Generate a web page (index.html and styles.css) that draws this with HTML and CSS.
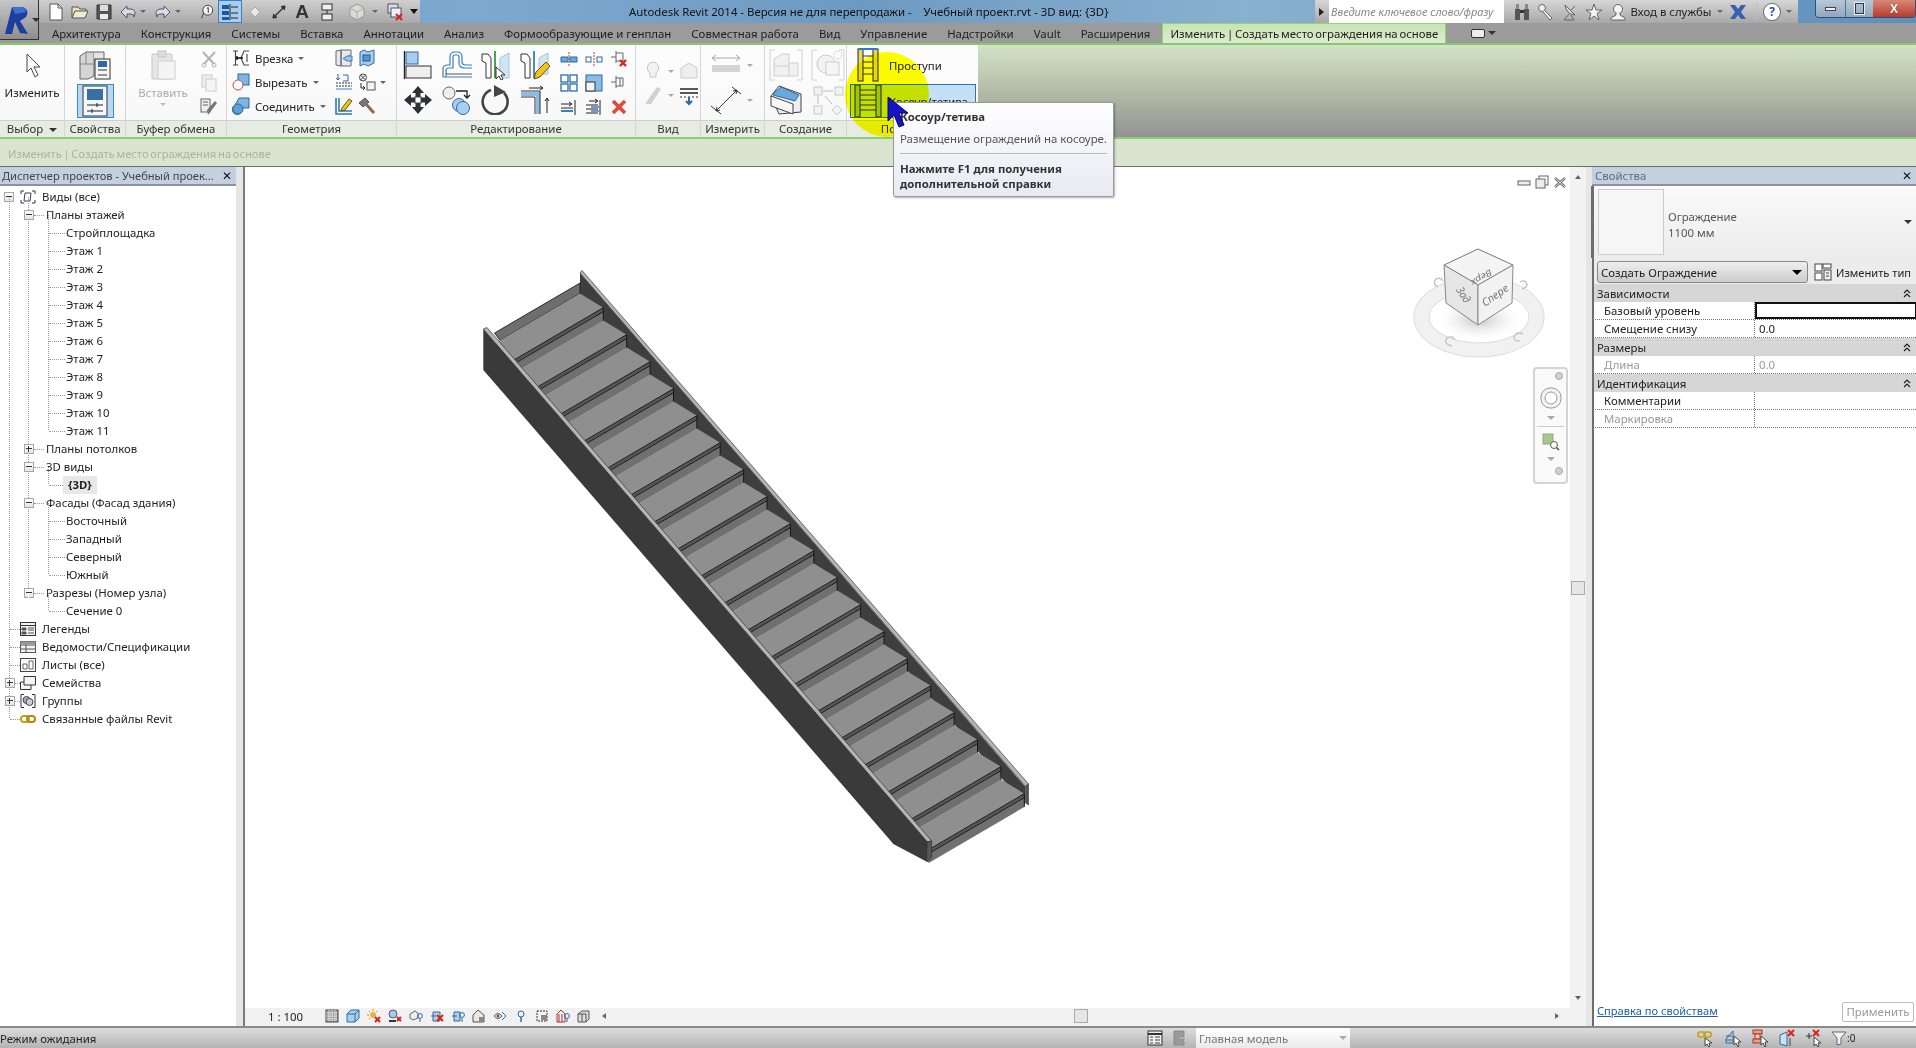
FILE: index.html
```html
<!DOCTYPE html>
<html lang="ru">
<head>
<meta charset="utf-8">
<title>Autodesk Revit 2014</title>
<link rel="stylesheet" href="styles.css">
</head>
<body>
<div class="app">

  <div class="appbtn">
    <svg width="27" height="30" viewBox="0 0 27 30"><path d="M1 29 L8 2 L19 2 Q26 5 22 12 L16 16 L24 29 L16 28 L11 17 L8 29Z" fill="#1c3f9e"/><path d="M8 2 L19 2 Q22 3 22 7 L11 9Z" fill="#3f6fd0"/></svg>
    <span class="caret dark"></span>
  </div>

  <header class="titlebar">
    <div class="qat">
      <svg class="q q1" viewBox="0 0 16 18"><path d="M2 1H10L14 5V17H2Z" fill="#fff" stroke="#555"/><path d="M10 1V5H14" fill="none" stroke="#555"/></svg>
      <svg class="q q2" viewBox="0 0 18 18"><path d="M1 15V4H7L9 6H15V8" fill="#e8e0b8" stroke="#555"/><path d="M1 15L4 8H17L14 15Z" fill="#f1eacb" stroke="#555"/></svg>
      <svg class="q q3" viewBox="0 0 16 18"><path d="M1 2H15V16H1Z" fill="#555" stroke="#333"/><rect x="4" y="2" width="8" height="6" fill="#ddd"/><rect x="4" y="11" width="8" height="5" fill="#eee"/></svg>
      <svg class="q q4" viewBox="0 0 18 18"><path d="M8 3L2 9L8 15V11H12Q15 11 15 14Q18 7 12 6H8Z" fill="#d6dde6" stroke="#556"/></svg>
      <span class="caret small"></span>
      <svg class="q q5" viewBox="0 0 18 18"><path d="M10 3L16 9L10 15V11H6Q3 11 3 14Q0 7 6 6H10Z" fill="#d6dde6" stroke="#556"/></svg>
      <span class="caret small"></span>
      <svg class="q q6" viewBox="0 0 20 18"><path d="M5 16L8 9" stroke="#333" fill="none"/><circle cx="12" cy="7" r="5.5" fill="#f4f4f4" stroke="#333"/><path d="M11 5L12.5 4V10" stroke="#222" fill="none"/></svg>
      <span class="qhl"><svg width="18" height="18" viewBox="0 0 18 18"><rect x="1" y="2" width="7" height="4" fill="#1d5a9c"/><rect x="1" y="8" width="7" height="4" fill="#1d5a9c"/><rect x="1" y="14" width="7" height="3" fill="#1d5a9c"/><path d="M10 4H17M10 10H17M10 15H17M9 1V17" stroke="#222" fill="none"/></svg></span>
      <svg class="q q7" viewBox="0 0 18 18"><path d="M4 9L9 4L14 9L9 14Z" fill="#e7e7e7" stroke="#aaa"/></svg>
      <svg class="q q8" viewBox="0 0 18 18"><path d="M3 15L15 3M3 15L7 14M3 15L4 11M15 3L11 4M15 3L14 7" fill="none" stroke="#333" stroke-width="1.4"/></svg>
      <span class="qa">A</span>
      <svg class="q q9" viewBox="0 0 16 18"><rect x="3" y="1" width="10" height="6" fill="#eee" stroke="#333"/><rect x="3" y="11" width="10" height="6" fill="#eee" stroke="#333"/><path d="M8 7V11" stroke="#333"/></svg>
      <svg class="q q10" viewBox="0 0 18 18"><path d="M9 1L16 5V13L9 17L2 13V5Z" fill="#d8dcd8" stroke="#999"/><path d="M2 5L9 9L16 5M9 9V17" stroke="#aaa" fill="none"/></svg>
      <span class="caret small"></span>
      <svg class="q q11" viewBox="0 0 18 18"><rect x="2" y="1" width="10" height="9" fill="#dde" stroke="#555"/><rect x="5" y="5" width="10" height="9" fill="#eef" stroke="#555"/><path d="M10 11L16 17M16 11L10 17" stroke="#d8231c" stroke-width="2"/></svg>
      <span class="qend"></span>
    </div>
    <div class="title-text">Autodesk Revit 2014 - Версия не для перепродажи -&nbsp;&nbsp;&nbsp; Учебный проект.rvt - 3D вид: {3D}</div>
    <div class="infobar">
      <span class="tri-right"></span>
      <span class="search">Введите ключевое слово/фразу</span>
      <svg class="q r1" viewBox="0 0 18 18"><rect x="2" y="6" width="5" height="11" fill="#555"/><rect x="11" y="6" width="5" height="11" fill="#555"/><rect x="3" y="1" width="3" height="5" fill="#888"/><rect x="12" y="1" width="3" height="5" fill="#888"/><rect x="7" y="7" width="4" height="3" fill="#333"/></svg>
      <svg class="q r2" viewBox="0 0 18 18"><circle cx="5" cy="5" r="3.5" fill="#eee" stroke="#666"/><path d="M7.5 7.5L15 15L13 17L6 9" fill="#eee" stroke="#666"/></svg>
      <svg class="q r3" viewBox="0 0 18 18"><path d="M4 2Q5 11 14 12Z" fill="#ddd" stroke="#666"/><path d="M9 8L14 3M8 11L3 17H13L10 12" fill="none" stroke="#666"/></svg>
      <svg class="q r4" viewBox="0 0 18 18"><path d="M9 1L11 7H17L12 10.5L14 17L9 13L4 17L6 10.5L1 7H7Z" fill="#f3f3f3" stroke="#666"/></svg>
      <svg class="q r5" viewBox="0 0 18 18"><circle cx="9" cy="6" r="4.5" fill="#f3f3f3" stroke="#666"/><path d="M7 10V12L2 15V17H16V15L11 12V10" fill="#f3f3f3" stroke="#666"/></svg>
      <span class="login">Вход в службы</span>
      <span class="caret small"></span>
      <svg class="q r6" viewBox="0 0 18 18"><path d="M1 2H6L9 6L12 2H17L12 9L17 16H12L9 12L6 16H1L6 9Z" fill="#3a5fb0"/></svg>
      <span class="vsep"></span>
      <span class="help">?</span>
      <span class="caret small"></span>
    </div>
    <div class="winbtns">
      <span class="wb wb-min"><i></i></span>
      <span class="wb wb-res"><i></i></span>
      <span class="wb wb-close">X</span>
    </div>
  </header>

  <nav class="tabs">
    <span class="tab">Архитектура</span>
    <span class="tab">Конструкция</span>
    <span class="tab">Системы</span>
    <span class="tab">Вставка</span>
    <span class="tab">Аннотации</span>
    <span class="tab">Анализ</span>
    <span class="tab">Формообразующие и генплан</span>
    <span class="tab">Совместная работа</span>
    <span class="tab">Вид</span>
    <span class="tab">Управление</span>
    <span class="tab">Надстройки</span>
    <span class="tab">Vault</span>
    <span class="tab">Расширения</span>
    <span class="tab tab-active">Изменить | Создать место ограждения на основе</span>
    <span class="tabopt"><i></i><span class="caret dark"></span></span>
  </nav>

  <section class="ribbon">

    <div class="panel p-select">
      <div class="body col-center">
        <svg width="24" height="30" viewBox="0 0 24 30"><path d="M7 4V22L11 18L15 27L18 25L14 17H20Z" fill="#fff" stroke="#444"/></svg>
        <span class="big-label">Изменить</span>
      </div>
      <div class="foot">Выбор <span class="caret dark foot-caret"></span></div>
    </div>

    <div class="panel p-props">
      <div class="body col-center props-body">
        <svg width="34" height="30" viewBox="0 0 34 30"><path d="M2 6L8 2H16V26L10 29H2Z" fill="#d5d5d5" stroke="#666"/><path d="M16 2H26V10H16" fill="#e4e4e4" stroke="#666"/><path d="M2 14H16M8 2V14" stroke="#888" fill="none"/><rect x="17" y="9" width="15" height="20" fill="#f5f5f5" stroke="#333"/><rect x="20" y="11" width="9" height="6" fill="#2d68a8"/><path d="M20 20H29M20 25H29" stroke="#333"/></svg>
        <span class="props-hl"><svg width="28" height="32" viewBox="0 0 28 32"><rect x="2" y="1" width="24" height="30" fill="#f3f6fa" stroke="#333"/><rect x="6" y="4" width="16" height="11" fill="#3a6ea8"/><path d="M6 20H22M6 26H22M16 18V22M11 24V28" stroke="#222"/></svg></span>
      </div>
      <div class="foot">Свойства</div>
    </div>

    <div class="panel p-clip">
      <div class="body clip-body">
        <div class="col-center clip-main">
          <svg width="28" height="30" viewBox="0 0 28 30"><rect x="3" y="4" width="20" height="25" rx="1" fill="#e6e6e6" stroke="#c5c5c5"/><rect x="9" y="1" width="8" height="6" fill="#dcdcdc" stroke="#c5c5c5"/><rect x="9" y="11" width="17" height="18" fill="#f4f4f4" stroke="#cfcfcf"/></svg>
          <span class="big-label muted">Вставить</span>
          <span class="caret muted-caret"></span>
        </div>
        <div class="stack3">
          <svg class="i18" viewBox="0 0 18 18"><path d="M3 2L14 14M15 2L4 14" stroke="#b4b4b4" stroke-width="2"/><circle cx="4" cy="15" r="2" fill="none" stroke="#b4b4b4"/><circle cx="14" cy="15" r="2" fill="none" stroke="#b4b4b4"/></svg>
          <svg class="i18" viewBox="0 0 18 18"><rect x="2" y="1" width="10" height="12" fill="#eee" stroke="#ccc"/><rect x="6" y="5" width="10" height="12" fill="#f5f5f5" stroke="#ccc"/></svg>
          <svg class="i18" viewBox="0 0 18 18"><rect x="1" y="1" width="9" height="13" fill="#eee" stroke="#666"/><path d="M3 4H8M3 7H8" stroke="#666"/><path d="M8 17L17 5L15 3L7 12Z" fill="#777"/></svg>
        </div>
      </div>
      <div class="foot">Буфер обмена</div>
    </div>

    <div class="panel p-geom">
      <div class="body geom-body">
        <div class="geom-list">
          <div class="gi"><svg class="i18" viewBox="0 0 18 18"><path d="M1 2H6M1 16H6M3.5 2V16M17 2H12L9 9L12 16H17M15 5V13" fill="none" stroke="#444" stroke-width="1.1"/><path d="M4 9H11M5 7V11" stroke="#111" stroke-width="1.4"/></svg><span>Врезка</span><span class="caret small"></span></div>
          <div class="gi"><svg class="i18" viewBox="0 0 18 18"><rect x="6" y="1" width="11" height="11" fill="#7fb3e0" stroke="#2b6ba5"/><circle cx="6" cy="12" r="5" fill="#fff" stroke="#c0504d"/></svg><span>Вырезать</span><span class="caret small"></span></div>
          <div class="gi"><svg class="i18" viewBox="0 0 18 18"><path d="M7 1H17V11H10A5 5 0 1 1 3 8Z" fill="#7fb3e0" stroke="#2b6ba5"/><circle cx="6" cy="12" r="5" fill="#5f9fd6" stroke="#2b6ba5"/></svg><span>Соединить</span><span class="caret small"></span></div>
        </div>
        <div class="stack3">
          <svg class="i18" viewBox="0 0 18 18"><path d="M1 2L6 1V17L1 16ZM6 1H16V6L10 9L16 12V17H6Z" fill="#e9e9e9" stroke="#667"/><path d="M17 7H12L8 9.5L12 12H17Z" fill="#9ac6ea" stroke="#3a7fc1"/></svg>
          <svg class="i18" viewBox="0 0 18 18"><path d="M1 10H17M1 13H17" stroke="#333" stroke-dasharray="2 1"/><path d="M1 16H17" stroke="#3a7fc1"/><path d="M8 2H13V8H8M3 1V7M1 5L3 7L5 5" fill="none" stroke="#2b6ba5"/></svg>
          <svg class="i18" viewBox="0 0 18 18"><path d="M1 1V17H17M4 1V14H17" fill="none" stroke="#2b7ac0" stroke-width="1.6"/><path d="M7 11L14 2L17 4L10 13L6 14Z" fill="#f0c419" stroke="#6b5410"/></svg>
        </div>
        <div class="stack3 wide-stack">
          <svg class="i18" viewBox="0 0 18 18"><path d="M2 3L6 1L10 3L16 1V14L10 17L6 15L2 17Z" fill="#a9cdec" stroke="#2b6ba5"/><rect x="5" y="6" width="7" height="6" fill="#5c96cc" stroke="#1e5a94"/></svg>
          <span class="withcaret"><svg class="i18" viewBox="0 0 18 18"><circle cx="5" cy="4.5" r="3.5" fill="none" stroke="#444"/><path d="M2.5 2L7.5 7M7.5 2L2.5 7" stroke="#444"/><rect x="9" y="9" width="8" height="8" fill="#f3f3f3" stroke="#555"/><path d="M3 10V15H7M5 13L7 15L5 17" fill="none" stroke="#222"/></svg><span class="caret small"></span></span>
          <svg class="i18" viewBox="0 0 18 18"><path d="M1 6L7 1L11 5L5 10Z" fill="#777" stroke="#555"/><path d="M8 7L16 16" stroke="#8a6d50" stroke-width="3"/></svg>
        </div>
      </div>
      <div class="foot">Геометрия</div>
    </div>

    <div class="panel p-edit">
      <div class="body edit-body">
        <div class="edit-big">
          <svg class="i30" viewBox="0 0 30 30"><path d="M1.5 1V29" stroke="#222" stroke-width="1.4"/><rect x="3" y="2" width="12" height="12" fill="#a8cdef" stroke="#2b6ba5"/><rect x="3" y="16" width="25" height="12" fill="#efefef" stroke="#333"/></svg>
          <svg class="i30" viewBox="0 0 30 30"><path d="M1 27V19Q1 15 6 15H8V7Q8 2 13 2H15Q20 2 20 7V12Q20 15 24 15H30M1 27H30M4 27V20Q4 18 7 18H11V7Q11 5 13 5H15Q17 5 17 7V13Q17 18 23 18H30" fill="none" stroke="#3a7fc1" stroke-width="1.2"/><path d="M4 24H30" stroke="#555"/></svg>
          <svg class="i30" viewBox="0 0 30 30"><path d="M1 4H7L10 8V28H5V13L1 11Z" fill="#fff" stroke="#333"/><path d="M14 1V28" stroke="#3a9a3a" stroke-width="1.8"/><path d="M28 3L19 8V28H28Z" fill="#d0e4f4" stroke="#a5c4de"/><path d="M15 17V29L18 26L20 30L22 29L20 25H24Z" fill="#fff" stroke="#333"/></svg>
          <svg class="i30" viewBox="0 0 30 30"><path d="M1 4H7L10 8V28H5V13L1 11Z" fill="#fff" stroke="#333"/><path d="M14 1V28" stroke="#3a7fc1" stroke-width="1.8"/><path d="M28 3L19 8V24H28Z" fill="#d0e4f4" stroke="#a5c4de"/><path d="M14 29L16 22L26 12L30 16L20 27Z" fill="#f0c419" stroke="#6b5410"/></svg>
          <svg class="i30" viewBox="0 0 30 30"><path d="M15 1L21 8H17.5V12H12.500V8H9ZM15 29L21 22H17.5V18H12.500V22H9ZM1 15L8 9V12.500H12V17.500H8V21ZM29 15L22 9V12.500H18V17.500H22V21Z" fill="#2a3238"/><rect x="12" y="12" width="6" height="6" fill="#fff" stroke="#444"/></svg>
          <svg class="i30" viewBox="0 0 30 30"><circle cx="7" cy="8" r="6" fill="#eee" stroke="#666"/><path d="M14 6H25V13M22 10L25 13L28 10" fill="none" stroke="#222" stroke-width="1.3"/><circle cx="17" cy="20" r="6.500" fill="#a8cdef" stroke="#2b6ba5"/><circle cx="21" cy="23" r="6.500" fill="#a8cdef" stroke="#2b6ba5"/></svg>
          <svg class="i30" viewBox="0 0 30 30"><path d="M23 8A12.500 12.500 0 1 1 10 5" fill="none" stroke="#444" stroke-width="2.6"/><path d="M13 0L25 7L13 12Z" fill="#444"/></svg>
          <svg class="i30" viewBox="0 0 30 30"><path d="M1 9H18V29" fill="none" stroke="#8bbce6" stroke-width="4"/><path d="M1 6H20V29M1 12H15V29" fill="none" stroke="#333"/><path d="M9 3H23M20 1L23 3L20 5M27 28V13M25 16L27 13L29 16" fill="none" stroke="#222"/></svg>
          <span></span>
        </div>
        <div class="edit-small">
          <svg class="i18" viewBox="0 0 18 18"><path d="M9 2V17" stroke="#c0392b" stroke-dasharray="2 1"/><path d="M1 7H8V12H1ZM10 7H17V12H10Z" fill="#6aa8dc" stroke="#2b6ba5"/></svg>
          <svg class="i18" viewBox="0 0 18 18"><path d="M9 2V17" stroke="#c0392b" stroke-dasharray="2 1"/><rect x="1" y="7" width="5" height="5" fill="#fff" stroke="#2b6ba5"/><rect x="12" y="7" width="5" height="5" fill="#fff" stroke="#2b6ba5"/></svg>
          <svg class="i18" viewBox="0 0 18 18"><path d="M6 1V13M1 7H6M6 3H13V11H6" fill="none" stroke="#666"/><path d="M10 10L16 16M16 10L10 16" stroke="#d8231c" stroke-width="2.4"/></svg>
          <svg class="i18" viewBox="0 0 18 18"><rect x="1" y="1" width="7" height="7" fill="#fff" stroke="#2b6ba5" stroke-width="1.3"/><rect x="10" y="1" width="7" height="7" fill="#fff" stroke="#2b6ba5" stroke-width="1.3"/><rect x="1" y="10" width="7" height="7" fill="#fff" stroke="#2b6ba5" stroke-width="1.3"/><rect x="10" y="10" width="7" height="7" fill="#fff" stroke="#2b6ba5" stroke-width="1.3"/></svg>
          <svg class="i18" viewBox="0 0 18 18"><rect x="1" y="1" width="16" height="16" fill="#8bbce6" stroke="#2b6ba5"/><rect x="1" y="8" width="9" height="9" fill="#f4f4f4" stroke="#333"/></svg>
          <svg class="i18" viewBox="0 0 18 18"><path d="M6 2V14M1 8H6M6 4H13V12H6M10 4V12" fill="none" stroke="#666"/></svg>
          <svg class="i18" viewBox="0 0 18 18"><path d="M1 6H11M9 4L12 6L9 8" fill="none" stroke="#222"/><path d="M1 10H13" stroke="#222"/><path d="M1 13H13" stroke="#3a7fc1" stroke-width="2"/><path d="M15 2V17" stroke="#222"/></svg>
          <svg class="i18" viewBox="0 0 18 18"><path d="M4 3H12M10 1L13 3L10 5" fill="none" stroke="#222"/><path d="M1 7H13M1 11H13M1 15H13" stroke="#222"/><path d="M6 9H14M6 13H14" stroke="#3a7fc1" stroke-width="1.6"/><path d="M15 2V17" stroke="#222"/></svg>
          <svg class="i18" viewBox="0 0 18 18"><path d="M3 3L15 15M15 3L3 15" stroke="#e0493b" stroke-width="3.6"/></svg>
        </div>
      </div>
      <div class="foot">Редактирование</div>
    </div>

    <div class="panel p-view">
      <div class="body pair-body">
        <span class="withcaret"><svg class="i22" viewBox="0 0 22 22"><path d="M11 2A6 6 0 0 1 14 13V17H8V13A6 6 0 0 1 11 2Z" fill="#f2f2f2" stroke="#c8c8c8"/></svg><span class="caret small faint"></span><svg class="i22" viewBox="0 0 22 22"><path d="M3 8L11 3L19 8V18H3Z" fill="#eee" stroke="#ccc"/></svg></span>
        <span class="withcaret"><svg class="i22" viewBox="0 0 22 22"><path d="M3 20L15 3L19 5L9 20Z" fill="#d0d0d0"/></svg><span class="caret small faint"></span><svg class="i22" viewBox="0 0 22 22"><path d="M2 5H20M2 9H20" stroke="#222" stroke-width="1.4"/><path d="M2 13H20" stroke="#333" stroke-dasharray="2 2"/><path d="M11 13V20M8 17L11 20L14 17" fill="none" stroke="#2b6ba5" stroke-width="2"/></svg></span>
      </div>
      <div class="foot">Вид</div>
    </div>

    <div class="panel p-measure">
      <div class="body pair-body">
        <span class="withcaret"><svg class="i30w" viewBox="0 0 34 30"><path d="M3 8H31M3 8L7 5M3 8L7 11M31 8L27 5M31 8L27 11" fill="none" stroke="#aaa"/><rect x="3" y="15" width="28" height="7" fill="#d4d4d4"/></svg><span class="caret small faint"></span></span>
        <span class="withcaret"><svg class="i30w" viewBox="0 0 34 30"><path d="M7 26L28 5M2 21L12 29M23 2L32 9" fill="none" stroke="#333"/><path d="M7 26L11 25M7 26L8 22M28 5L24 6M28 5L27 9" stroke="#333"/></svg><span class="caret small faint"></span></span>
      </div>
      <div class="foot">Измерить</div>
    </div>

    <div class="panel p-create">
      <div class="body create-body">
        <svg class="i30w" viewBox="0 0 34 32"><path d="M1 1V31M1 1H6M1 31H6" stroke="#d0d0d0" fill="none"/><path d="M33 1V31M33 1H28M33 31H28" stroke="#d0d0d0" fill="none"/><path d="M5 10L13 5H20V14H29V27H5Z" fill="#f1f1f1" stroke="#cfcfcf"/><path d="M5 17H20V27M20 14V17" stroke="#cfcfcf" fill="none"/></svg>
        <svg class="i30w" viewBox="0 0 34 32"><path d="M1 1V31M1 1H6M1 31H6M33 1V31M33 1H28M33 31H28" stroke="#d0d0d0" fill="none"/><circle cx="15" cy="15" r="9" fill="#f2f2f2" stroke="#ccc"/><rect x="15" y="13" width="13" height="13" fill="#f5f5f5" stroke="#ccc"/><circle cx="27" cy="6" r="4" fill="none" stroke="#ccc" stroke-dasharray="2 1"/></svg>
        <svg class="i30w" viewBox="0 0 34 32"><path d="M2 12L10 2L32 10V28L10 30Z" fill="#eee" stroke="#444"/><path d="M4 10L12 3L30 11L26 17L4 11Z" fill="#6aa8dc" stroke="#2b6ba5"/><path d="M2 12L24 20V30L2 22Z" fill="#f7f7f7" stroke="#444"/></svg>
        <svg class="i30w" viewBox="0 0 34 32"><rect x="3" y="3" width="8" height="8" fill="#f2f2f2" stroke="#c8c8c8"/><rect x="24" y="3" width="8" height="8" fill="#f2f2f2" stroke="#c8c8c8"/><rect x="3" y="22" width="8" height="8" fill="#f2f2f2" stroke="#c8c8c8"/><path d="M21 26L26 21L31 26L26 31Z" fill="#f2f2f2" stroke="#c8c8c8"/><path d="M12 7H22M7 12V20M14 12L21 20" stroke="#bbb"/></svg>
      </div>
      <div class="foot">Создание</div>
    </div>

    <div class="panel p-place">
      <div class="body place-body">
        <div class="place-row">
          <svg class="i34" viewBox="0 0 24 34"><rect x="2" y="1" width="5" height="32" fill="#e8d85a" stroke="#225"/><rect x="17" y="1" width="5" height="32" fill="#e8d85a" stroke="#225"/><path d="M7 8H17M7 14H17M7 20H17M7 26H17" stroke="#334"/><path d="M3 1H21" stroke="#2b7ad0" stroke-width="2"/></svg>
          <span>Проступи</span>
        </div>
        <div class="place-row place-active">
          <svg class="i34" viewBox="0 0 32 34"><rect x="3" y="1" width="5" height="32" fill="#9cc83a" stroke="#223"/><rect x="24" y="1" width="5" height="32" fill="#9cc83a" stroke="#223"/><path d="M8 6H24M8 11H24M8 16H24M8 21H24M8 26H24" stroke="#334"/></svg>
          <span>Косоур/тетива</span>
        </div>
      </div>
      <div class="foot foot-place">Положение</div>
    </div>
    <div class="ribbon-rest"></div>
  </section>

  <div class="optionsbar">Изменить | Создать место ограждения на основе</div>

  <main class="workspace">
    <aside class="browser">
      <div class="dock-head browser-head"><span>Диспетчер проектов - Учебный проек...</span><b>✕</b></div>
      <div class="tree">
        <div class="row"><span class="exp minus"></span><svg class="ti views" viewBox="0 0 16 14"><path d="M1 4V1H4M12 1H15V4M1 10V13H4M15 10V13H12" fill="none" stroke="#333"/><path d="M5 3H11L10 11H4Z" fill="none" stroke="#345"/></svg><span class="label l0">Виды (все)</span></div>
        <div class="branch b-root">
          <div class="branch b-l1 end-27">
            <div class="row"><span class="exp minus lift"></span><span class="dots d10"></span><span class="label lt">Планы этажей</span></div>
            <div class="branch b-l2">
              <div class="row"><span class="dots d17"></span><span class="label">Стройплощадка</span></div>
              <div class="row"><span class="dots d17"></span><span class="label">Этаж 1</span></div>
              <div class="row"><span class="dots d17"></span><span class="label">Этаж 2</span></div>
              <div class="row"><span class="dots d17"></span><span class="label">Этаж 3</span></div>
              <div class="row"><span class="dots d17"></span><span class="label">Этаж 4</span></div>
              <div class="row"><span class="dots d17"></span><span class="label">Этаж 5</span></div>
              <div class="row"><span class="dots d17"></span><span class="label">Этаж 6</span></div>
              <div class="row"><span class="dots d17"></span><span class="label">Этаж 7</span></div>
              <div class="row"><span class="dots d17"></span><span class="label">Этаж 8</span></div>
              <div class="row"><span class="dots d17"></span><span class="label">Этаж 9</span></div>
              <div class="row"><span class="dots d17"></span><span class="label">Этаж 10</span></div>
              <div class="row"><span class="dots d17"></span><span class="label">Этаж 11</span></div>
            </div>
            <div class="row"><span class="exp plus lift"></span><span class="dots d10"></span><span class="label lt">Планы потолков</span></div>
            <div class="row"><span class="exp minus lift"></span><span class="dots d10"></span><span class="label lt">3D виды</span></div>
            <div class="branch b-l2">
              <div class="row"><span class="dots d17"></span><span class="label current">{3D}</span></div>
            </div>
            <div class="row"><span class="exp minus lift"></span><span class="dots d10"></span><span class="label lt">Фасады (Фасад здания)</span></div>
            <div class="branch b-l2">
              <div class="row"><span class="dots d17"></span><span class="label">Восточный</span></div>
              <div class="row"><span class="dots d17"></span><span class="label">Западный</span></div>
              <div class="row"><span class="dots d17"></span><span class="label">Северный</span></div>
              <div class="row"><span class="dots d17"></span><span class="label">Южный</span></div>
            </div>
            <div class="row"><span class="exp minus lift"></span><span class="dots d10"></span><span class="label lt">Разрезы (Номер узла)</span></div>
            <div class="branch b-l2">
              <div class="row"><span class="dots d17"></span><span class="label">Сечение 0</span></div>
            </div>
          </div>
          <div class="row"><span class="dots d10"></span><svg class="ti" viewBox="0 0 16 14"><rect x=".5" y=".5" width="15" height="13" fill="#f2f2f2" stroke="#333"/><path d="M.5 3.5H15.5" stroke="#333"/><path d="M2 6H6V8H2ZM2 10H6V12H2ZM8 6H14M8 8H14M8 11H14" fill="#555" stroke="#555"/></svg><span class="label l0b">Легенды</span></div>
          <div class="row"><span class="dots d10"></span><svg class="ti" viewBox="0 0 16 14"><rect x=".5" y="1.5" width="15" height="11" fill="#f2f2f2" stroke="#555"/><path d="M.5 5H15.5M.5 9H15.5M6 1.5V12.5" stroke="#555"/><rect x=".5" y="1.5" width="15" height="3" fill="#999"/></svg><span class="label l0b">Ведомости/Спецификации</span></div>
          <div class="row"><span class="dots d10"></span><svg class="ti" viewBox="0 0 16 14"><rect x=".5" y=".5" width="15" height="13" fill="#fafafa" stroke="#444"/><path d="M3 11V6H7V11ZM9 11V3H13V11Z" fill="#fff" stroke="#666"/></svg><span class="label l0b">Листы (все)</span></div>
          <div class="row"><span class="exp plus lift"></span><span class="dots d5"></span><svg class="ti" viewBox="0 0 16 14"><path d="M4 .5H15.5V9H11V13.5H.5V6H4Z" fill="#f5f5f5" stroke="#333"/><path d="M4 6V9H11" fill="none" stroke="#333"/></svg><span class="label l0b">Семейства</span></div>
          <div class="row"><span class="exp plus lift"></span><span class="dots d5"></span><svg class="ti" viewBox="0 0 16 14"><path d="M4 .5H1V13.5H4M12 .5H15V13.5H12" fill="none" stroke="#333"/><circle cx="6.5" cy="6" r="3.5" fill="#aab" stroke="#444"/><circle cx="9.5" cy="8" r="3.5" fill="#ccd" stroke="#444"/></svg><span class="label l0b">Группы</span></div>
          <div class="row"><span class="dots d10"></span><svg class="ti" viewBox="0 0 16 14"><rect x="1" y="4" width="8" height="6" rx="3" fill="none" stroke="#c8a010" stroke-width="2"/><rect x="7" y="4" width="8" height="6" rx="3" fill="none" stroke="#b08a10" stroke-width="2"/></svg><span class="label l0b">Связанные файлы Revit</span></div>
        </div>
      </div>
    </aside>

    <section class="viewport">
      <div class="view-main">
        <div class="canvas">
          <svg class="stair" width="570" height="610" viewBox="470 260 570 610">
            <defs>
              <g id="step">
                <polygon fill="#8f8f8f" points="0,0 -96,56.2 -119,42 -23.3,-14.3"/>
                <polygon fill="#555" points="0,0 0,4 -96,60.2 -96,56.2"/>
                <polygon fill="#707070" points="0,4 0,13.3 -96,69.5 -96,60.2"/>
                <path d="M0 0L-96 56.2M0 4L-96 60.2M0 0V13.3" stroke="#111" stroke-width=".9" fill="none"/>
              </g>
            </defs>
            <polygon fill="#3e3e3e" points="580,273 1025,786.5 1025,805 580,297"/>
            <polygon fill="#6e6e6e" stroke="#111" stroke-width=".8" points="580,283 580,293.4 500,340.5 494.5,333"/>
            <use href="#step" transform="translate(603.3 307.7)"/>
            <use href="#step" transform="translate(626.7 334.7)"/>
            <use href="#step" transform="translate(650.1 361.7)"/>
            <use href="#step" transform="translate(673.5 388.7)"/>
            <use href="#step" transform="translate(696.9 415.7)"/>
            <use href="#step" transform="translate(720.2 442.7)"/>
            <use href="#step" transform="translate(743.6 469.7)"/>
            <use href="#step" transform="translate(767 496.7)"/>
            <use href="#step" transform="translate(790.4 523.7)"/>
            <use href="#step" transform="translate(813.8 550.7)"/>
            <use href="#step" transform="translate(837.2 577.7)"/>
            <use href="#step" transform="translate(860.6 604.7)"/>
            <use href="#step" transform="translate(884 631.7)"/>
            <use href="#step" transform="translate(907.4 658.7)"/>
            <use href="#step" transform="translate(930.8 685.7)"/>
            <use href="#step" transform="translate(954.1 712.7)"/>
            <use href="#step" transform="translate(977.5 739.7)"/>
            <use href="#step" transform="translate(1000.9 766.7)"/>
            <use href="#step" transform="translate(1024.3 793.7)"/>
            <polygon fill="#3a3a3a" points="483.3,329 927.3,841.7 927.3,862 893.3,844 890,840 483.3,370"/>
            <polygon fill="#b4b4b4" stroke="#222" stroke-width=".6" points="483.3,329 487,327.5 931.7,841 927.3,841.7"/>
            <polygon fill="#555" stroke="#222" stroke-width=".5" points="927.3,841.7 931.7,841 931.7,857.5 927.3,862"/>
            <polygon fill="#b4b4b4" stroke="#222" stroke-width=".6" points="580,273 582,270.5 1028.5,784 1025.5,786.5"/>
            <polygon fill="#555" stroke="#222" stroke-width=".5" points="1025.5,786.5 1028.5,784 1028.5,805 1025.5,803"/>
          </svg>

          <div class="vctrls">
            <svg width="14" height="14" viewBox="0 0 14 14"><rect x="1" y="6" width="12" height="4" fill="#eee" stroke="#666"/></svg>
            <svg width="14" height="14" viewBox="0 0 14 14"><rect x="4" y="1" width="9" height="9" fill="#fff" stroke="#666"/><rect x="1" y="4" width="9" height="9" fill="#eee" stroke="#666"/></svg>
            <svg width="14" height="14" viewBox="0 0 14 14"><path d="M2 3L12 12M12 3L2 12" stroke="#666" stroke-width="2.4"/><path d="M2 3L12 12M12 3L2 12" stroke="#fff" stroke-width=".8"/></svg>
          </div>

          <svg class="cube" width="144" height="124" viewBox="1408 240 144 124">
            <defs>
              <radialGradient id="shade"><stop offset="0" stop-color="#c4c4c4"/><stop offset="1" stop-color="#fff" stop-opacity="0"/></radialGradient>
            </defs>
            <ellipse cx="1479" cy="317" rx="58" ry="33" fill="none" stroke="#f1f1f1" stroke-width="15"/>
            <ellipse cx="1479" cy="317" rx="65" ry="40" fill="none" stroke="#d4d4d4" stroke-dasharray="2 1"/>
            <ellipse cx="1479" cy="317" rx="50" ry="26" fill="none" stroke="#dcdcdc"/>
            <ellipse cx="1479" cy="320" rx="46" ry="22" fill="url(#shade)"/>
            <polygon points="1478,249 1513,265 1478,285 1444,265" fill="#f4f4f4" stroke="#777"/>
            <polygon points="1444,265 1478,285 1478,325 1446,303" fill="#e6e6e6" stroke="#888"/>
            <polygon points="1478,285 1513,265 1512,303 1478,325" fill="#f2f2f2" stroke="#888"/>
            <text class="cube-t" transform="translate(1490 269) rotate(150) scale(1 .8)">Верх</text>
            <text class="cube-t" transform="translate(1456 290) rotate(58) scale(.9 1)">Зад</text>
            <text class="cube-t" transform="translate(1485 307) rotate(-35)">Спере</text>
            <path d="M1438 287q-6 -3 -2 -8q5 -2 7 2M1520 282q5 -3 7 2q0 4 -5 5M1452 346q-9 -2 -5 -8q6 -3 8 2M1520 341q-6 1 -6 -4q3 -6 9 -3" fill="none" stroke="#c4c4c4" stroke-width="1.4"/>
          </svg>

          <div class="navbar">
            <i class="nb-dot"></i>
            <svg width="24" height="24" viewBox="0 0 24 24"><rect x="2" y="2" width="20" height="20" rx="9" fill="#f3f3f3" stroke="#999"/><circle cx="12" cy="12" r="6" fill="#fff" stroke="#999"/></svg>
            <span class="caret faint"></span>
            <hr>
            <svg width="18" height="18" viewBox="0 0 18 18"><rect x="1" y="1" width="10" height="10" fill="#a8c888" stroke="#8a9"/><circle cx="12" cy="12" r="3.5" fill="#fff" stroke="#555"/><path d="M14.5 14.5L17 17" stroke="#555" stroke-width="1.6"/></svg>
            <span class="caret faint"></span>
            <i class="nb-dot"></i>
          </div>
        </div>
        <div class="vscroll"><span class="arr-up"></span><i></i><span class="thumb"></span><i></i><span class="arr-down"></span></div>
      </div>
      <div class="viewbar">
        <span class="scale">1 : 100</span>
        <div class="vb-icons">
          <svg viewBox="0 0 14 14"><rect x="1" y="1" width="12" height="12" fill="#aaa" stroke="#444"/><path d="M1 4H13M1 7H13M1 10H13M4 1V13M7 1V13M10 1V13" stroke="#eee" stroke-dasharray="1 1"/></svg>
          <svg viewBox="0 0 14 14"><path d="M1 5L5 1H13V9L9 13H1Z" fill="#a8d0f0" stroke="#2b6ba5"/><path d="M1 5H9V13M9 5L13 1" fill="none" stroke="#2b6ba5"/></svg>
          <svg viewBox="0 0 14 14"><circle cx="6" cy="6" r="3" fill="#f0b030"/><path d="M6 0V2M0 6H2M2 2L3 3M10 2L9 3M2 10L3 9" stroke="#d89020"/><path d="M8 8L13 13M13 8L8 13" stroke="#d8231c" stroke-width="2"/></svg>
          <svg viewBox="0 0 14 14"><circle cx="5" cy="5" r="4" fill="#a8c8e8" stroke="#557"/><path d="M1 12H8" stroke="#333" stroke-width="2"/><path d="M9 8L13 12M13 8L9 12" stroke="#d8231c" stroke-width="2"/></svg>
          <svg viewBox="0 0 14 14"><path d="M1 5L6 2L9 4V9L4 11L1 9Z" fill="#eee" stroke="#666"/><circle cx="11" cy="7" r="2.4" fill="none" stroke="#2b6ba5"/><path d="M11 10V13" stroke="#2b6ba5"/></svg>
          <svg viewBox="0 0 14 14"><path d="M1 7H6M3 3H10V12H3Z" fill="#bcd" stroke="#2b6ba5"/><path d="M7 6L13 12M13 6L7 12" stroke="#d8231c" stroke-width="2"/></svg>
          <svg viewBox="0 0 14 14"><path d="M1 7H6M3 3H9V12H3Z" fill="#bcd" stroke="#2b6ba5"/><circle cx="11" cy="6" r="2.4" fill="none" stroke="#2b6ba5"/><path d="M11 9V13" stroke="#2b6ba5"/></svg>
          <svg viewBox="0 0 14 14"><path d="M1 6L6 1L12 6V13H1Z" fill="#e8e8e8" stroke="#555"/><rect x="7" y="8" width="5" height="5" fill="#888"/></svg>
          <svg viewBox="0 0 14 14"><path d="M1 7Q5 2 9 7Q5 12 1 7Z" fill="none" stroke="#555"/><circle cx="5" cy="7" r="1.4" fill="#555"/><path d="M9 3L13 7L9 11" fill="none" stroke="#2b6ba5"/></svg>
          <svg viewBox="0 0 14 14"><circle cx="7" cy="5" r="3" fill="none" stroke="#2b6ba5"/><path d="M7 8V13" stroke="#2b6ba5" stroke-width="1.5"/></svg>
          <svg viewBox="0 0 14 14"><path d="M2 2H12V12H2Z" fill="none" stroke="#333" stroke-dasharray="2 1"/><rect x="6" y="6" width="6" height="5" fill="#888"/></svg>
          <svg viewBox="0 0 14 14"><path d="M1 5L5 1L9 5V13H1Z" fill="none" stroke="#a33"/><path d="M3 5V13M6 5V13" stroke="#a33"/><circle cx="11" cy="7" r="2.4" fill="none" stroke="#2b6ba5"/><path d="M11 10V13" stroke="#2b6ba5"/></svg>
          <svg viewBox="0 0 14 14"><path d="M1 5L5 2H12V10L9 13H1Z" fill="#ddd" stroke="#555"/><path d="M1 5H9V13M5 5V13" fill="none" stroke="#555"/></svg>
        </div>
        <span class="arr-left"></span>
        <i class="sp"></i><span class="thumb"></span><i class="sp"></i>
        <span class="arr-right"></span>
      </div>
    </section>

    <aside class="props">
      <div class="dock-head props-head"><span>Свойства</span><b>✕</b></div>
      <div class="typesel">
        <span class="preview"></span>
        <span class="type-name">Ограждение<br>1100 мм</span>
        <span class="caret dark"></span>
      </div>
      <div class="instance">
        <span class="combo">Создать Ограждение<span class="caret black"></span></span>
        <svg width="18" height="18" viewBox="0 0 18 18"><rect x="1" y="1" width="7" height="7" fill="#fff" stroke="#444"/><rect x="9" y="1" width="8" height="4" fill="#fff" stroke="#444"/><rect x="1" y="10" width="7" height="7" fill="#fff" stroke="#444"/><rect x="10" y="7" width="7" height="10" fill="#f0f0f0" stroke="#444"/><path d="M12 10H15M12 13H15" stroke="#444"/></svg>
        <span class="edit-type">Изменить тип</span>
      </div>
      <div class="pgroup"><span>Зависимости</span><svg class="chev" viewBox="0 0 8 9"><path d="M1 4L4 1L7 4M1 8L4 5L7 8" fill="none" stroke="#222" stroke-width="1.2"/></svg></div>
      <div class="prow"><span>Базовый уровень</span><span class="pval pval-sel"></span></div>
      <div class="prow"><span>Смещение снизу</span><span class="pval">0.0</span></div>
      <div class="pgroup"><span>Размеры</span><svg class="chev" viewBox="0 0 8 9"><path d="M1 4L4 1L7 4M1 8L4 5L7 8" fill="none" stroke="#222" stroke-width="1.2"/></svg></div>
      <div class="prow dim"><span>Длина</span><span class="pval">0.0</span></div>
      <div class="pgroup"><span>Идентификация</span><svg class="chev" viewBox="0 0 8 9"><path d="M1 4L4 1L7 4M1 8L4 5L7 8" fill="none" stroke="#222" stroke-width="1.2"/></svg></div>
      <div class="prow"><span>Комментарии</span><span class="pval"></span></div>
      <div class="prow dim"><span>Маркировка</span><span class="pval"></span></div>
      <div class="props-foot"><a class="help-link">Справка по свойствам</a><span class="apply">Применить</span></div>
    </aside>
  </main>

  <footer class="statusbar">
    <span class="status-text">Режим ожидания</span>
    <svg class="st st-a" viewBox="0 0 16 16"><rect x="1" y="1" width="14" height="14" fill="#eee" stroke="#333"/><path d="M1 4H15" stroke="#333" stroke-width="2"/><path d="M3 7H6M3 10H6M3 13H6M8 7H13M8 10H13M8 13H13" stroke="#444"/></svg>
    <svg class="st st-b" viewBox="0 0 16 16"><path d="M2 1H12V15H2Z" fill="#999" stroke="#888"/><path d="M8 8H15M12 5L15 8L12 11" fill="none" stroke="#ccc"/></svg>
    <span class="model">Главная модель<span class="caret faint"></span></span>
    <i class="sp"></i>
    <div class="sel-icons">
      <svg viewBox="0 0 18 18"><rect x="1" y="3" width="7" height="5" rx="2" fill="none" stroke="#c8a010" stroke-width="1.6"/><rect x="7" y="3" width="7" height="5" rx="2" fill="none" stroke="#c8a010" stroke-width="1.6"/><path d="M8 9V17L10 15L12 18L13 17L12 14H15Z" fill="#fff" stroke="#444"/></svg>
      <svg viewBox="0 0 18 18"><path d="M2 10L9 2V14H2Z" fill="none" stroke="#2b6ba5"/><path d="M2 7H8M2 11H8" stroke="#2b6ba5"/><path d="M10 7V16L12 14L14 18L15 17L14 13H17Z" fill="#fff" stroke="#444"/></svg>
      <svg viewBox="0 0 18 18"><rect x="2" y="1" width="9" height="4" fill="#e8a080" stroke="#a33"/><rect x="4" y="5" width="5" height="5" fill="#f4d0b0" stroke="#a33"/><rect x="2" y="10" width="9" height="4" fill="#e8a080" stroke="#a33"/><path d="M10 7V16L12 14L14 18L15 17L14 13H17Z" fill="#fff" stroke="#444"/></svg>
      <svg viewBox="0 0 18 18"><path d="M2 6L9 3V17L2 15Z" fill="#cfe0f0" stroke="#2b6ba5"/><path d="M10 1L16 7M16 1L10 7" stroke="#d8231c" stroke-width="2"/><path d="M12 9V17" stroke="#444"/></svg>
      <svg viewBox="0 0 18 18"><path d="M1 7H7M4 4V10" stroke="#333"/><path d="M8 1L14 7M14 1L8 7" stroke="#d8231c" stroke-width="2"/><path d="M9 8V17L11 15L13 18L14 17L13 14H16Z" fill="#fff" stroke="#444"/></svg>
    </div>
    <svg class="st funnel" viewBox="0 0 16 16"><path d="M1 2H15L10 8V14L6 15V8Z" fill="#eef2f6" stroke="#667"/></svg>
    <span class="count">:0</span>
  </footer>

  <div class="spot"></div>
  <div class="tooltip">
    <b class="tt-title">Косоур/тетива</b>
    <span class="tt-desc">Размещение ограждений на косоуре.</span>
    <hr>
    <b class="tt-help">Нажмите F1 для получения<br>дополнительной справки</b>
  </div>
  <svg class="pointer" width="24" height="32" viewBox="0 0 24 32"><path d="M2 1V25L8 19L13 31L18 29L13 17H22Z" fill="#1414c8" stroke="#0a0a50"/></svg>
</div>
</body>
</html>
```
FILE: styles.css
```css
* { box-sizing: border-box; }
html, body { margin: 0; padding: 0; }
body { background: #fff; font-family: "Noto Sans", "Open Sans", sans-serif; font-size: 11.4px; color: #222; }
svg { display: block; flex: none; }
i, em { font-style: normal; }
.app { position: relative; width: 1916px; height: 1048px; overflow: hidden; display: flex; flex-direction: column; }
.sp { flex: 1; }

.caret { display: inline-block; width: 0; height: 0; border-left: 4px solid transparent; border-right: 4px solid transparent; border-top: 4px solid #666; flex: none; }
.caret.small { border-left-width: 3px; border-right-width: 3px; border-top-width: 3px; }
.caret.dark { border-top-color: #333; }
.caret.black { border-top-color: #000; border-left-width: 5px; border-right-width: 5px; border-top-width: 5px; }
.caret.faint { border-top-color: #aaa; }
.muted-caret { border-top-color: #bbb; border-left-width: 3px; border-right-width: 3px; border-top-width: 3px; }
.foot-caret { margin-left: 3px; vertical-align: 1px; }

/* title bar */
.appbtn { position: absolute; left: 0; top: 0; width: 39px; height: 40px; z-index: 5; display: flex; align-items: center; gap: 1px; padding: 1px 0 0 4px; background: linear-gradient(#c6c6c6, #8e8e8e); border-right: 1px solid #333; border-bottom: 1px solid #333; }
.titlebar { height: 23px; flex: none; display: flex; align-items: stretch; padding-left: 39px; background: linear-gradient(90deg, #6a9bc6 0, #7ea9cf 25%, #6d9ac2 45%, #8ab0d0 65%, #5f8fbd 100%); }
.qat { width: 381px; flex: none; display: flex; align-items: center; padding-left: 8px; background: linear-gradient(#cfcfcf, #a9a9a9); }
.q { width: 18px; height: 18px; }
.qat .q { margin-right: 6px; }
.qat .q4, .qat .q5 { margin-right: 3px; }
.qat .caret { margin-right: 8px; }
.qat .q6 { margin-left: 8px; margin-right: 3px; }
.qat .q9 { margin-right: 12px; }
.qat .q10 { margin-right: 6px; }
.qhl { width: 24px; height: 23px; background: #a9cdee; border: 1px solid #3a7fc1; display: flex; align-items: center; justify-content: center; margin-right: 4px; }
.qa { font: bold 19px "Liberation Sans", sans-serif; width: 16px; text-align: center; margin-right: 8px; color: #333; }
.qend { flex: none; width: 0; height: 0; border-left: 4px solid transparent; border-right: 4px solid transparent; border-top: 5px solid #111; }
.title-text { width: 895px; flex: none; padding-left: 209px; line-height: 23px; white-space: nowrap; color: #111; }
.infobar { width: 483px; flex: none; display: flex; align-items: center; background: linear-gradient(#d6d6d6, #a8a8a8); padding-left: 4px; }
.tri-right { width: 0; height: 0; border-top: 4px solid transparent; border-bottom: 4px solid transparent; border-left: 5px solid #222; margin-right: 5px; flex: none; }
.search { width: 180px; height: 23px; background: #fff; padding-left: 2px; font-size: 11px; font-style: italic; color: #888; line-height: 23px; white-space: nowrap; overflow: hidden; margin-right: 9px; }
.infobar .q { margin-right: 6px; }
.infobar .r5 { margin-right: 4px; }
.login { margin-right: 5px; white-space: nowrap; }
.infobar .caret { margin-right: 6px; }
.vsep { width: 1px; height: 18px; background: #bbb; margin: 0 7px 0 3px; }
.help { width: 18px; height: 18px; border-radius: 50%; background: #fff; border: 1px solid #667; color: #2a4fb0; font-weight: 700; font-size: 12px; line-height: 16px; text-align: center; margin-right: 5px; }
.winbtns { flex: 1; display: flex; height: 18px; margin-left: 17px; border: 1px solid #33506e; border-top: 0; border-radius: 0 0 4px 4px; overflow: hidden; }
.wb { display: flex; align-items: center; justify-content: center; }
.wb-min { width: 30px; background: linear-gradient(#b8c8d8, #8ea8c0); border-right: 1px solid #5a7088; }
.wb-min i { width: 11px; height: 4px; background: #eef; border: 1px solid #445; }
.wb-res { width: 27px; background: linear-gradient(#b8c8d8, #8ea8c0); }
.wb-res i { width: 9px; height: 11px; border: 1px solid #334; outline: 1px solid #eee; }
.wb-close { flex: 1; background: linear-gradient(#d88878, #b83a2a); color: #fff; font: bold 12px "Liberation Sans", sans-serif; text-shadow: 0 0 1px #333; }

/* tabs */
.tabs { height: 22px; flex: none; display: flex; align-items: stretch; padding-left: 42px; background: #9b9b9b; border-bottom: 2px solid #86c96b; }
.tab { padding: 0 10px; line-height: 22px; white-space: nowrap; color: #1e1e1e; }
.tab-active { margin-left: 2px; padding: 0 7px; background: linear-gradient(#c9e3b4, #dcecd0); border: 1px solid #94d66e; border-bottom: 0; line-height: 20px; word-spacing: -1.2px; }
.tabopt { display: flex; align-items: center; gap: 3px; margin-left: 25px; }
.tabopt i { width: 14px; height: 9px; border: 1px solid #333; border-radius: 2px; background: #eee; }

/* ribbon */
.ribbon { height: 94px; flex: none; display: flex; background: #cfe0c3; border-bottom: 2px solid #8ccc72; }
.panel { flex: none; display: flex; flex-direction: column; background: linear-gradient(#fdfdfd, #f7f7f7); border-right: 1px solid #d5d5d5; }
.body { height: 75px; }
.foot { height: 17px; background: #e6ebe4; border-top: 1px solid #cfcfcf; text-align: center; line-height: 16px; color: #333; white-space: nowrap; }
.p-select { width: 65px; } .p-props { width: 61px; } .p-clip { width: 101px; } .p-geom { width: 170px; }
.p-edit { width: 239px; } .p-view { width: 65px; } .p-measure { width: 64px; } .p-create { width: 82px; } .p-place { width: 131px; border-right: 0; }
.ribbon-rest { flex: 1; background: linear-gradient(#d3e3c6, #a9b09f 65%, #939393); }
.col-center { display: flex; flex-direction: column; align-items: center; }
.p-select .body { padding-top: 5px; }
.big-label { line-height: 16px; margin-top: 5px; white-space: nowrap; }
.muted { color: #aaa; }
.props-body { padding-top: 5px; gap: 4px; }
.props-hl { width: 37px; height: 34px; background: #b8d8f2; border: 1px solid #2f8ecb; display: flex; align-items: center; justify-content: center; }
.clip-body { display: flex; padding-top: 5px; }
.clip-main { width: 74px; }
.clip-main .big-label { margin-bottom: 2px; }
.stack3 { display: flex; flex-direction: column; gap: 6px; align-items: center; }
.i18 { width: 18px; height: 18px; }
.i22 { width: 22px; height: 22px; }
.i30 { width: 30px; height: 30px; }
.i30w { width: 34px; height: 30px; }
.i34 { height: 34px; width: 32px; }
.geom-body { display: flex; padding: 4px 0 0 5px; }
.geom-list { width: 104px; display: flex; flex-direction: column; gap: 6px; }
.gi { height: 18px; display: flex; align-items: center; gap: 5px; }
.wide-stack { width: 44px; align-items: flex-start; padding-left: 5px; }
.withcaret { display: flex; align-items: center; gap: 4px; }
.edit-body { display: flex; padding: 5px 0 0 6px; }
.edit-big { width: 161px; display: grid; grid-template-columns: repeat(4, 39px); grid-template-rows: 30px 30px; row-gap: 5px; justify-items: start; }
.edit-small { display: grid; grid-template-columns: repeat(3, 25px); grid-template-rows: repeat(3, 18px); row-gap: 6px; margin-left: -1px; }
.pair-body { display: flex; flex-direction: column; gap: 2px; padding: 15px 0 0 6px; }
.p-measure .pair-body { padding: 5px 0 0 8px; gap: 5px; }
.create-body { display: grid; grid-template-columns: 42px 34px; grid-template-rows: 32px 32px; row-gap: 3px; padding: 4px 0 0 4px; }
.create-body .i30w { height: 32px; }
.place-body { display: flex; flex-direction: column; padding: 3px 2px 0 3px; gap: 2px; }
.place-row { display: flex; align-items: center; gap: 5px; height: 34px; padding-left: 2px; white-space: nowrap; overflow: hidden; }
.place-active { background: #c4e0f6; border: 1px solid #2f77ab; padding-left: 1px; }

/* options bar */
.optionsbar { height: 28px; flex: none; background: #dae5d0; border-bottom: 1px solid #6e6e6e; padding-left: 8px; line-height: 29px; color: #a9b3a0; word-spacing: -1.2px; font-size: 11.2px; }

/* workspace */
.workspace { flex: 1; min-height: 0; display: flex; }
.dock-head { height: 19px; flex: none; display: flex; align-items: center; justify-content: space-between; background: #c3d0e0; border-bottom: 2px solid #8b949e; }
.dock-head b { font: bold 12px "DejaVu Sans", sans-serif; color: #111; }
.browser { width: 243px; flex: none; display: flex; flex-direction: column; background: #fff; border-right: 7px solid #e6e6e6; }
.browser-head { padding: 0 4px 0 2px; color: #444; white-space: nowrap; font-size: 11.1px; }
.tree { padding-top: 2px; }
.row { height: 18px; display: flex; align-items: center; white-space: nowrap; position: relative; }
.label { padding: 0 1px; line-height: 18px; color: #222; }
.l0 { margin-left: 1px; }
.l0b { padding-left: 6px; }
.lt { margin-left: 1px; }
.current { font-weight: 700; background: #e8e8e8; padding: 0 5px; margin-left: -2px; }
.exp { width: 10px; height: 10px; flex: none; border: 1px solid #a6a6a6; background: linear-gradient(#fff, #e4e4e4); position: relative; }
.exp::before { content: ""; position: absolute; left: 1px; right: 1px; top: 3px; height: 1px; background: #333; }
.plus::after { content: ""; position: absolute; top: 1px; bottom: 1px; left: 3px; width: 1px; background: #333; }
.tree > .row > .exp { margin-left: 4px; }
.ti { width: 16px; height: 14px; }
.views { margin-left: 6px; margin-right: 4px; }
.lift { margin-left: -5px; }
.dots { flex: none; height: 0; border-top: 1px dotted #999; }
.d5 { width: 5px; } .d10 { width: 10px; } .d17 { width: 16px; }
.branch { position: relative; border-left: 1px dotted #999; }
.branch::after { content: ""; position: absolute; left: -1px; bottom: 0; width: 1px; height: 9px; background: #fff; }
.b-root { margin-left: 9px; margin-top: -9px; padding-top: 9px; }
.b-l1 { margin-left: 18px; margin-top: -9px; padding-top: 9px; }
.end-27::after { height: 27px; }
.b-l2 { margin-left: 19px; margin-top: -9px; padding-top: 9px; }

.viewport { flex: 1; min-width: 0; display: flex; flex-direction: column; border-left: 2px solid #7a7a7a; padding-bottom: 2px; background: #f3f3f3; }
.view-main { flex: 1; min-height: 0; display: flex; }
.canvas { flex: 1; position: relative; background: #fff; }
.stair { position: absolute; left: 225px; top: 93px; }
.vctrls { position: absolute; top: 8px; right: 3px; display: flex; gap: 4px; }
.cube { position: absolute; left: 1163px; top: 73px; }
.cube-t { font-size: 11px; font-style: italic; fill: #777; }
.navbar { position: absolute; left: 1288px; top: 200px; width: 35px; height: 117px; border: 2px solid #d4d4d4; border-radius: 4px; background: #fafafa; display: flex; flex-direction: column; align-items: center; padding: 3px 2px; gap: 6px; }
.navbar hr { width: 100%; margin: 0; border: 0; border-top: 1px solid #ccc; }
.nb-dot { width: 8px; height: 8px; border-radius: 50%; background: #d0d0d0; border: 1px solid #aaa; align-self: flex-end; margin-right: 1px; }
.vscroll { width: 16px; flex: none; display: flex; flex-direction: column; align-items: center; padding: 8px 0; background: #f2f2f2; }
.vscroll i { flex: 1; }
.thumb { width: 14px; height: 14px; flex: none; background: #e6e6e6; border: 1px solid #aaa; }
.arr-up, .arr-down, .arr-left, .arr-right { width: 0; height: 0; flex: none; }
.arr-up { border: 3px solid transparent; border-top: 0; border-bottom: 4px solid #666; }
.arr-down { border: 3px solid transparent; border-bottom: 0; border-top: 4px solid #666; }
.arr-left { border: 3px solid transparent; border-left: 0; border-right: 4px solid #666; }
.arr-right { border: 3px solid transparent; border-right: 0; border-left: 4px solid #666; }
.viewbar { height: 16px; flex: none; display: flex; align-items: center; padding-left: 23px; padding-right: 27px; background: #f1f1f1; }
.scale { width: 57px; flex: none; white-space: nowrap; }
.vb-icons { display: flex; gap: 7px; margin-right: 11px; }
.vb-icons svg { width: 14px; height: 14px; }
.props { width: 330px; flex: none; display: flex; flex-direction: column; border-left: 6px solid #e6e6e6; background: #fff; position: relative; }
.props-head { padding: 0 4px 0 3px; color: #5c6c80; border-bottom-color: #8b949e; }
.typesel { height: 72px; flex: none; margin-left: -1px; border-left: 3px solid #6d6d6d; display: flex; align-items: center; padding: 0 4px; background: linear-gradient(#fafafa, #ececec); line-height: 16px; color: #555; }
.preview { width: 66px; height: 66px; border: 1px solid #ccc; background: #f6f6f6; flex: none; margin-right: 4px; }
.type-name { flex: 1; margin-top: 6px; }
.instance { height: 26px; flex: none; display: flex; align-items: center; padding: 2px 0 0 3px; border-left: 2px solid #6d6d6d; background: #ececec; gap: 4px; }
.combo { width: 211px; height: 22px; display: flex; align-items: center; justify-content: space-between; padding: 0 5px 0 3px; border: 1px solid #888; border-radius: 3px; background: linear-gradient(#eee, #cdcdcd); white-space: nowrap; margin-right: 2px; }
.edit-type { white-space: nowrap; font-size: 11.1px; }
.pgroup { height: 18px; flex: none; display: flex; justify-content: space-between; align-items: center; padding: 0 5px 0 3px; background: #d6d6d6; border-left: 2px solid #6d6d6d; }
.chev { width: 8px; height: 9px; }
.prow { height: 18px; flex: none; display: grid; grid-template-columns: 161px 1fr; border-bottom: 1px dotted #777; border-left: 2px solid #6d6d6d; line-height: 17px; }
.prow > span:first-child { padding-left: 10px; border-right: 1px dotted #777; }
.pval { padding-left: 4px; }
.pval-sel { border: 2px solid #111; border-right-width: 1px; }
.dim { color: #999; }
.props-foot { flex: 1; display: flex; align-items: flex-end; justify-content: space-between; padding: 0 2px 4px 3px; border-left: 2px solid #6d6d6d; }
.help-link { color: #1f5fae; text-decoration: underline; margin-bottom: 4px; font-size: 11.1px; }
.apply { width: 72px; height: 20px; border: 1px solid #bbb; border-radius: 2px; text-align: center; line-height: 18px; color: #999; }

/* status bar */
.statusbar { height: 22px; flex: none; display: flex; align-items: center; background: linear-gradient(#dcdcdc, #b4b4b4); border-top: 2px solid #8a8a8a; }
.status-text { width: 1147px; flex: none; white-space: nowrap; }
.st { width: 16px; height: 16px; }
.st-b { margin-left: 9px; margin-right: 8px; }
.model { width: 154px; height: 20px; flex: none; display: flex; align-items: center; justify-content: space-between; padding: 0 3px; background: linear-gradient(#fff, #eaeaea); color: #777; white-space: nowrap; }
.sel-icons { display: flex; gap: 9px; margin-right: 8px; }
.sel-icons svg { width: 18px; height: 18px; }
.count { width: 69px; flex: none; font-size: 10px; }

/* overlays */
.spot { position: absolute; left: 845px; top: 52px; width: 84px; height: 85px; border-radius: 50%; background: #ffff00; mix-blend-mode: multiply; }
.tooltip { position: absolute; left: 893px; top: 102px; width: 221px; height: 95px; background: linear-gradient(#fff, #e8e9f2); border: 1px solid #9a9a9a; border-radius: 2px; box-shadow: 1px 1px 2px rgba(0,0,0,.3); padding: 6px 6px; display: flex; flex-direction: column; color: #444; white-space: nowrap; }
.tt-title { color: #333; line-height: 15px; }
.tt-desc { margin-top: 7px; line-height: 15px; color: #555; }
.tooltip hr { width: 100%; margin: 7px 0 6px; border: 0; border-top: 1px solid #bbb; border-bottom: 1px solid #f5f5f5; }
.tt-help { line-height: 15px; color: #333; }
.pointer { position: absolute; left: 886px; top: 96px; }
```
